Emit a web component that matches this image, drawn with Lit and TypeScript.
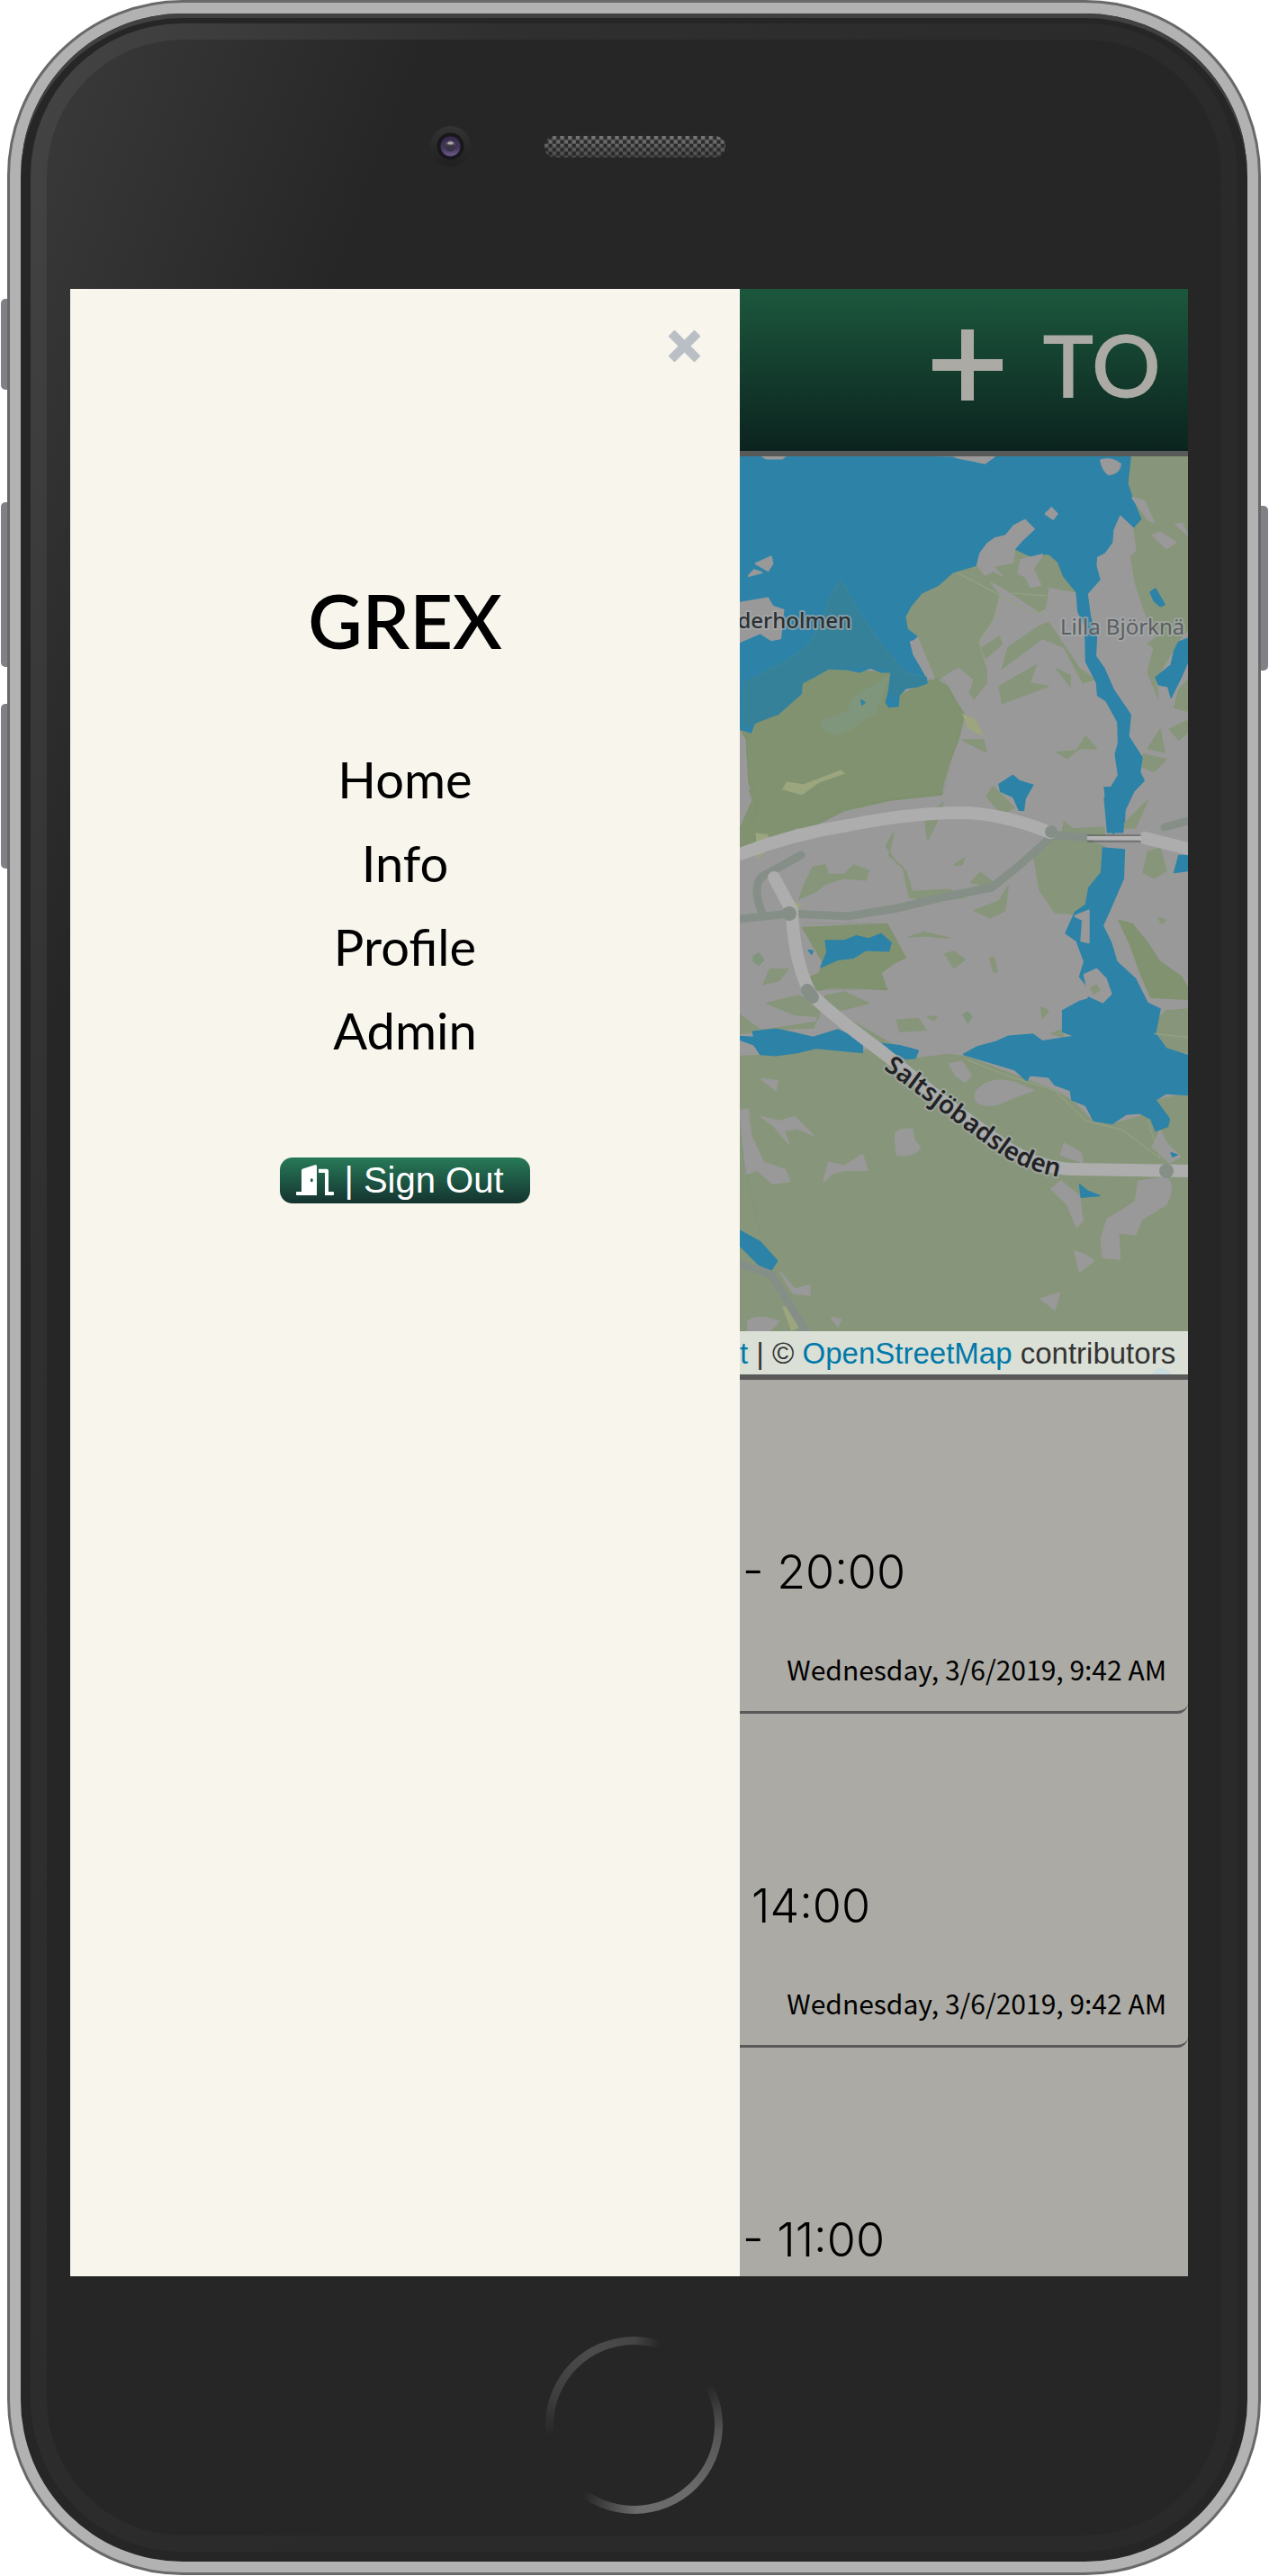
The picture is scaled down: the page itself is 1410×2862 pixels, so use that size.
import { LitElement, html, svg, css } from "lit";
import { customElement } from "lit/decorators.js";

const closeIcon = svg`<svg class="close-icon" viewBox="0 0 37 37" aria-hidden="true"><path d="M1 7 7 1h1l10.500 10.500L29 1h1l6 6v1L25.500 18.500 36 29v1l-6 6h-1L18.500 25.500 8 36H7l-6-6v-1l10.500-10.500L1 8z"/></svg>`;

const doorIcon = svg`<svg class="door-icon" viewBox="0 0 42 34" aria-hidden="true"><path fill-rule="evenodd" d="M6 6.500Q6 5 7.500 4.500L21 .3Q23 0 23 1.500V34H1Q0 34 0 33v-2q0-1 1-1h5zM17.300 15.300a1.500 2 0 1 0 0 4 1.500 2 0 1 0 0-4zM25 4.700h9q2 0 2 2V30h5q1 0 1 1v2q0 1-1 1h-9V9h-7z"/></svg>`;

const plusIcon = svg`<svg class="plus-icon" viewBox="0 0 78 79" aria-hidden="true"><path d="M32 0h14v33h32v13H46v33H32V46H0V33h32z"/></svg>`;

@customElement("area-map")
export class AreaMap extends LitElement {
  static styles = css`
    :host { display: block; position: relative; overflow: hidden; border-bottom: 6px solid #59595a; }
    .map { display: block; width: 100%; height: auto; }
    .g { fill: #87967a; stroke: #87967a; stroke-width: 4; stroke-linejoin: round; }
    .d { fill: #819270; stroke: #819270; stroke-width: 3; stroke-linejoin: round; }
    .w { fill: #2d83a7; stroke: #2d83a7; stroke-width: 4; stroke-linejoin: round; }
    .n { fill: #9a999a; stroke: #9a999a; stroke-width: 5; stroke-linejoin: round; }
    .y { fill: #9ba67f; }
    .park { fill: #35819a; }
    .pond { fill: #80967c; }
    .road { fill: none; stroke: #adadad; stroke-width: 14; stroke-linecap: round; }
    .minor { fill: none; stroke: #858f88; stroke-width: 9; stroke-linecap: round; }
    .knob { fill: #858f88; }
    .path { fill: none; stroke: #93a184; stroke-width: 3; }
    .dots { fill: none; stroke: #6d8d67; stroke-width: 3; stroke-dasharray: 3 5; opacity: .7; }
    .label { font-family: "Noto Sans", sans-serif; font-size: 24px; font-weight: 500; paint-order: stroke; stroke: #a5a9ab; stroke-width: 4px; stroke-linejoin: round; stroke-opacity: .7; fill: #2b2f31; }
    .label-soft { font-weight: 400; fill: #5c5f60; }
    .label-road { font-size: 28px; font-weight: 600; fill: #222; }
    .credit { position: absolute; right: 0; bottom: 0; left: 0; padding: 2px 17px 0 0; text-align: right; white-space: nowrap; font: 33px/46px "Liberation Sans", Arial, sans-serif; color: #333; background: rgba(255, 255, 255, .7); }
    .credit a { color: #0078a8; text-decoration: none; }
  `;

  render() {
    return html`
      <svg class="map" viewBox="0 0 498 1020" role="img" aria-label="Map">
        <rect class="n" width="498" height="1020"/>
        <g transform="translate(-22 393) scale(.3444 .4209)">
          <path class="g" d="M64 650 200 645 310 630 450 640 520 620 640 655 740 645 800 652 950 700 1080 740 1140 770 1205 825 1265 830 1370 805 1415 845 1450 815 1405 765 1510 750V1568H64z"/>
          <path class="d" d="M100-60H380L240 50 130 90 64 105V0z"/>
          <path class="g" d="M255 235 270 200 300 150 340 145 350 170 400 170 430 145 480 160 470 185 400 180 340 195 310 215zM535 95 560 60 545 120 590 150 610 230 700 240 790 230 740 210 620 215 600 160 570 140zM810 190 840 165 880 190 870 205zM1010 110 1060 80 1090 60 1240 95 1230 160 1190 205 1180 250 1140 275 1080 270 1030 210zM1380 110 1420 100 1440 160 1400 180 1365 165zM1110 30 1140 50 1240 45 1240 70 1100 75zM660 20 720-20 700 30 670 80z"/>
          <path class="g" d="M820 265 900 240 930 200 920 265 870 285zM725 380 755 373 790 395 755 417zM870 390l15 0 10 35-12 5zM610 335 660 322 740 338 655 332zM570 555 640 550 665 580 580 585zM670 545 700 545 690 555zM1035 520 1060 530 1040 550zM755 145 790 125 780 145zM1415 285 1440 290 1425 300zM1070 590 1100 580 1110 600zM1400 560 1440 530 1510 525V640L1440 630 1400 600z"/>
          <path class="d" d="M265 310 540 300 600 390 560 405 520 430 540 475 460 470 350 470 290 480 260 450 320 430 330 400zM1285 290 1330 300 1380 350 1420 400 1490 440 1510 470V500L1390 495 1360 440 1320 350z"/>
          <path class="g" d="M64 540 130 580 300 575 320 545 240 540 150 510 250 490 330 510 400 545 560 620 470 600 380 530 480 510 400 480 340 490 310 560 64 590zM160 420 220 420 190 450 140 460z"/>
          <path class="n" d="M64 795 90 790 100 860 140 930 210 950 225 980 170 985 120 950 85 960zM135 810 190 822 240 810 300 858 250 840 205 845 222 880 175 835zM335 980 350 930 400 940 460 910 475 950 400 950 360 960zM565 860Q570 840 620 843L625 870 645 890Q630 915 570 910zM740 670 780 665 810 700 790 717 760 700zM825 745Q870 700 950 720L1010 740Q950 755 900 775 840 785 825 765zM1110 880 1165 905 1170 930 1100 910zM1070 1000 1100 980 1160 1020 1170 1085 1150 1100 1120 1040zM1350 980 1440 970Q1470 990 1440 1040L1360 1080 1340 1120 1285 1115 1290 1185 1235 1180 1230 1130 1250 1080 1340 1035zM1145 1165 1180 1175 1205 1190 1160 1218zM1035 1290 1095 1275 1080 1318zM195 1220 240 1265 290 1255V1280L235 1275zM90 1350Q120 1330 190 1350L160 1375H90zM360 1340 390 1345 380 1362zM1395 890 1420 845 1440 880 1485 915 1450 930zM135 710 185 715 180 740z"/>
          <path class="y" d="M200 1310 220 1310 255 1365 230 1376zM115 60 155 65 160 100 120 130zM240 240 265 252 245 262z"/>
          <path class="w" d="M1240-60H1310L1305 30 1270 62 1255 50zM1235 100 1305 105 1302 180 1260 260 1235 305 1262 350 1280 400 1340 445 1380 510 1420 525 1405 590 1440 630 1510 648V752L1440 748 1405 765 1450 815 1445 835 1405 847 1390 815 1355 800 1310 803 1265 828 1205 820 1180 780 1135 765 1130 740 1080 725 1060 705 1000 700 990 715 950 685 785 645 830 625 890 612 930 597 1010 592 1040 610 1145 597 1105 585 1105 530 1160 505 1185 500 1200 480 1160 440 1175 400 1150 345 1115 325 1145 270 1180 250 1190 205 1230 165zM64 598 110 600 105 585 180 578 240 588 300 600 380 580 460 610 460 640 310 628 250 640 180 648 130 645 110 620 64 606zM505 615 580 622 640 635 630 655 600 657zM340 345 400 345 440 332 480 340 520 327 552 350 545 372 470 370 430 390 380 395 325 415 345 375zM64 1110 130 1140 185 1190 165 1215 125 1200 64 1150zM1160 988 1185 1005 1225 1018 1165 1022zM1480 120H1510V160L1465 165zM285 370 300 372 295 380zM1455 905 1475 910 1460 915z"/>
          <path class="n" d="M1175 435 1215 420 1245 445 1262 485 1235 507 1190 490zM1145 280 1190 265V350L1165 345 1170 290z"/>
          <path class="g" d="M1195 470 1215 462 1225 475 1205 485z"/>
          <path class="pond" d="M105 385 125 375 145 395 125 412 105 400zM780 540 800 530 815 545 800 565z"/>
          <path class="dots" d="M70 900 130 1120M300 475 540 472M270 300 500 298"/>
          <path class="path" d="M800 660 940 705 1080 740 1180 820 1300 845 1420 920M1380 820 1420 920M1440 130 1450 180M1400 590 1510 600"/>
          <path class="w" d="M1395 1490Q1420 1460 1455 1490z" opacity=".6"/>
        </g>
        <g transform="translate(-22 -207) scale(.3444 .3954)">
          <path class="g" d="M1325 520H1510V1010L1480 1040 1440 1100 1405 1150 1415 1205 1380 1130 1400 1060 1380 1050 1410 1030 1370 960 1340 880 1325 805 1345 790 1335 722 1358 700 1330 640 1315 600zM1510 1150 1480 1180 1465 1230 1510 1240zM1510 1265 1450 1290 1480 1320 1510 1300z"/>
          <path class="g" d="M597 975 615 945 650 908 705 885 750 850 825 830 900 912 880 980 835 1040 860 1120 860 1160 820 1205 805 1190 820 1150 770 1115 720 1140 700 1155 640 1030 605 1010z"/>
          <path class="g" d="M955 785 1000 803 1060 797 1090 820 1108 860 1150 905 1060 890 1050 950 1030 960 910 890 850 865 880 850 930 870 890 835 950 825zM840 1065 900 1030 910 1050 860 1090zM900 1170 1020 1110 1000 1160 1060 1170 910 1218zM930 1060 1030 1000 1060 990 1160 1120 1210 1150 1170 1160 1110 1060 1040 1035 910 1120zM1085 1355 1150 1350 1180 1310 1215 1345 1160 1345 1120 1372zM1380 1345 1420 1290 1435 1355zM1365 1360 1440 1375 1400 1410 1362 1395zM1085 1120 1130 1140 1130 1170zM780 1320 850 1320 860 1355zM880 1450 950 1510 910 1530 860 1480zM1310 1550 1380 1490 1340 1568H1300z"/>
          <path class="d" d="M64 1290 110 1275 150 1252 185 1250 262 1190 265 1160 350 1120 520 1130 552 1130 545 1228 578 1195 640 1170 690 1145 735 1170 760 1210 790 1250 770 1320 740 1385 720 1450 715 1475 550 1490 400 1520 290 1568H100L125 1500 90 1440 85 1320z"/>
          <path class="w" d="M64 520H1325L1315 600 1330 640 1358 700 1335 722 1290 685 1268 730 1265 765 1240 795 1215 805 1213 830 1225 870 1185 910 1195 975 1215 1030 1212 1085 1240 1120 1270 1180 1325 1250 1318 1310 1362 1370 1355 1410 1368 1435 1335 1465 1305 1520 1300 1580H1250L1245 1530 1240 1485 1285 1420 1275 1360 1285 1330 1283 1270 1245 1210 1218 1195 1215 1160 1180 1100 1178 1000 1155 960 1150 905 1108 860 1090 820 1060 797 1000 803 955 785 975 765 1020 728 985 697 945 715 920 742 885 750 860 765 835 795 825 830 750 850 705 885 650 908 615 945 597 975 605 1010 635 1030 615 1045 625 1080 665 1140 668 1160 640 1170 600 1175 578 1195 575 1225 545 1228 535 1215 545 1180 552 1130 520 1130 485 1118 450 1130 410 1122 350 1120 310 1140 265 1160 262 1190 185 1250 150 1252 110 1275 100 1300 64 1290z"/>
          <path class="park" d="M78 1160 190 1110 275 1065 330 990 355 920 390 870 440 950 510 1040 600 1135 665 1150 640 1170 600 1175 578 1195 552 1200V1130L485 1118 350 1120 265 1160 262 1190 185 1250 110 1275 78 1290z"/>
          <path class="dots" d="M78 1290V1160L190 1110 275 1065 330 990 355 920 390 870 440 950 510 1040 600 1135 720 1150 785 1245 720 1470 540 1490 400 1510 290 1560M85 1300 92 1430 125 1480 100 1560"/>
          <path class="n" d="M130 520H215L200 530H150zM610 520H740L770 528 820 536 855 543 885 524zM1228 535Q1260 525 1292 545 1290 570 1255 575 1235 565 1228 535zM1050 685 1070 668 1088 685 1075 700zM115 825 165 805 170 825 155 845zM92 860 110 843 135 850zM64 935 155 922 170 945 205 955 195 1035 165 1040 130 1020 64 1045zM615 1045 635 1040 690 1150 665 1140 625 1080zM1330 640 1370 650 1400 710 1380 700zM1395 745 1420 737 1470 765 1440 782zM1470 715 1490 712 1510 745zM970 815 1040 800 1010 840 1035 885 1000 890 990 865 962 850z"/>
          <path class="n" d="M64 1330H80L90 1460 100 1490 64 1560z"/>
          <path class="pond" d="M325 1265 410 1240 430 1200 545 1140 500 1250 470 1260 430 1290 370 1308 335 1295z"/>
          <path class="y" d="M200 1460 215 1438 270 1445 390 1405 405 1415 320 1440 265 1475zM780 1245 825 1262 850 1310 800 1290z"/>
          <path class="w" d="M900 1445 945 1420 965 1435 1010 1447 985 1485 980 1518H965L945 1480 905 1465zM1388 905 1405 895 1435 940 1420 945 1400 930zM1510 1035 1480 1045 1465 1070 1455 1110 1405 1145 1415 1165 1445 1170 1455 1202 1490 1140 1510 1100zM455 1208 468 1215 458 1222z"/>
          <path class="path" d="M765 850 900 912 1000 962 1060 965M940 908 1050 915M900 920 890 975 835 1045 858 1110"/>
        </g>
        <path class="minor" d="M0 514 55 508 120 511 175 502 225 490 280 479 310 455 347 422M25 508Q10 470 32 463L68 443M344 420 390 424M472 412 498 405"/>
        <path class="road" d="M0 442Q60 419 120 410 190 396 245 396 290 396 345 418M450 424 498 436M38 468 58 505Q60 560 78 596 95 615 160 663 240 730 300 770 335 791 370 792L498 794"/>
        <path d="M75 593 81 601" fill="none" stroke="#858f88" stroke-width="14" stroke-linecap="round"/>
        <circle class="knob" cx="55" cy="508" r="8"/>
        <circle class="knob" cx="474" cy="794" r="8"/>
        <circle class="knob" cx="346" cy="417" r="7"/>
        <path d="M386 421H446M386 428H446" stroke="#555" stroke-width="1"/>
        <path d="M386 424H446" stroke="#b5b5b5" stroke-width="4"/>
        <path class="minor" d="M0 897 35 909 75 975"/>
        <text class="label" x="124" y="191" text-anchor="end">derholmen</text>
        <text class="label label-soft" x="356" y="198">Lilla Björknä</text>
        <path id="road-line" fill="none" d="M159 680Q240 740 290 776 330 800 374 803"/>
        <text class="label label-road"><textPath href="#road-line">Saltsjöbadsleden</textPath></text>
      </svg>
      <div class="credit"><a href="#t">t</a> | © <a href="#osm">OpenStreetMap</a> contributors</div>
    `;
  }
}

@customElement("app-root")
export class AppRoot extends LitElement {
  static styles = css`
    :host { display: block; background: #fff; color: #000; }
    * { box-sizing: border-box; }
    .stage { display: grid; grid-template-columns: 8px minmax(0, 1fr) 9px; padding-bottom: 2px; }
    .side { display: flex; flex-direction: column; }
    .side-left { padding: 332px 0 0 1px; }
    .side-right { padding: 562px 1px 0 0; }
    .key { height: 183px; background: #808087; border-radius: 5px 0 0 5px; }
    .key-mute { height: 101px; margin-bottom: 125px; }
    .key-up { margin-bottom: 41px; }
    .key-power { border-radius: 0 5px 5px 0; }
    .shell { padding: 12px; border: 3px solid #696969; border-radius: 195px; background: #b2b2b2; }
    .rim { padding: 11px; border-radius: 180px; background: #262626; box-shadow: inset 0 5px 0 #404240; }
    .bevel { padding: 18px; border-radius: 169px; background: linear-gradient(111deg, #454545, #2f2f2f 22%, #2a2a2a 60%); }
    .face { border-radius: 151px; background: linear-gradient(111deg, #3a3a3a, #262626 18%); }
    .top { display: grid; grid-template-columns: 1fr auto 1fr; align-items: center; gap: 82px; padding: 96px 0 136px 1px; }
    .camera { display: block; width: 45px; height: 45px; justify-self: end; }
    .speaker { display: block; width: 201px; height: 24px; }
    .screen { display: grid; grid-template-columns: 744fr 498fr; margin: 0 37px 0 26px; }
    .drawer { display: flex; flex-direction: column; align-items: center; background: #f8f5ed; font-family: Lato, sans-serif; }
    .close { align-self: flex-end; margin: 45px 43px 0 0; padding: 0; border: 0; background: none; }
    .close-icon { display: block; width: 37px; height: 37px; fill: #b9bfc4; }
    .title { margin: 238px 0 82px; font-size: 83px; line-height: 96px; font-weight: 600; }
    .nav { display: flex; flex-direction: column; align-items: center; }
    .nav a { color: #000; text-decoration: none; font-size: 56px; line-height: 93px; font-weight: 400; }
    .signout { display: flex; align-items: center; gap: 11px; height: 51px; margin-top: 95px; padding: 0 29px 2px 18px; border: 0; border-radius: 14px; color: #fff; background: linear-gradient(#277a58, #14332f); font: 40px/46px "Liberation Sans", Arial, sans-serif; }
    .door-icon { width: 42px; height: 34px; fill: #fff; }
    .pane { min-width: 0; overflow: hidden; background: #abaaa4; }
    .bar { display: flex; justify-content: flex-end; align-items: center; gap: 44px; height: 186px; padding: 0 30px 12px 0; border-bottom: 6px solid #59595a; background: linear-gradient(#1c573d, #0b231e); color: #abaaa4; }
    .add { padding: 0; border: 0; background: none; }
    .plus-icon { display: block; width: 78px; height: 79px; fill: #abaaa4; }
    .account { font: 600 96px/120px Lato, sans-serif; }
    .list { margin: 0; padding: 0; list-style: none; }
    .item { padding: 174px 24px 24px 3px; border-bottom: 3px solid #59595a; border-bottom-right-radius: 12px; }
    .item-last { padding-bottom: 0; border: 0; }
    .time { display: block; font: 300 52px/80px Inter, sans-serif; }
    .time-inset { padding-left: 10px; }
    .stamp { display: block; margin-top: 45px; text-align: right; white-space: nowrap; font: 30px/45px "Noto Sans CJK JP", sans-serif; }
    .bottom { display: flex; justify-content: center; padding: 67px 0 24px; }
    .home { width: 197px; height: 197px; padding: 9px; border: 0; border-radius: 50%; background: conic-gradient(#454545, #26262600 18deg, #26262600 62deg, #555 95deg, #6b6b6b 140deg, #6b6b6b 178deg, #262626 216deg, #262626 263deg, #3e3e3e 290deg, #4c4c4c 330deg, #454545); }
    .home-face { display: block; height: 100%; border-radius: 50%; background: #262626; }
  `;

  private links = ["Home", "Info", "Profile", "Admin"];
  private entries = [
    { time: "- 20:00", stamp: "Wednesday, 3/6/2019, 9:42 AM" },
    { time: "14:00", stamp: "Wednesday, 3/6/2019, 9:42 AM" },
    { time: "- 11:00", stamp: "" },
  ];

  render() {
    return html`
      <div class="stage">
        <div class="side side-left">
          <div class="key key-mute"></div>
          <div class="key key-up"></div>
          <div class="key"></div>
        </div>
        <div class="shell"><div class="rim"><div class="bevel"><div class="face">
          <div class="top">
            <svg class="camera" viewBox="0 0 45 45" aria-hidden="true">
              <defs>
                <linearGradient id="ring" x2="0" y2="1"><stop stop-color="#333"/><stop offset="1" stop-color="#202020"/></linearGradient>
                <linearGradient id="lens" x2="0" y2="1"><stop stop-color="#35294a"/><stop offset=".6" stop-color="#44365c"/><stop offset="1" stop-color="#6d5c8a"/></linearGradient>
                <linearGradient id="core" x2="0" y2="1"><stop stop-color="#77747e"/><stop offset=".5" stop-color="#3a3640"/><stop offset="1" stop-color="#39304a"/></linearGradient>
              </defs>
              <circle cx="22.500" cy="22.500" r="22.500" fill="url(#ring)"/>
              <circle cx="22.500" cy="22.500" r="15" fill="#18181c"/>
              <circle cx="22.500" cy="22.500" r="11" fill="url(#lens)"/>
              <circle cx="22.500" cy="22.500" r="6" fill="url(#core)"/>
              <ellipse cx="22.500" cy="19" rx="3" ry="1.500" fill="#aaa"/>
            </svg>
            <svg class="speaker" viewBox="0 0 201 24" aria-hidden="true">
              <defs>
                <pattern id="mesh" width="8.700" height="8.700" patternUnits="userSpaceOnUse"><path fill="#777" d="M0 0h4.350v4.350H0zM4.350 4.350h4.350v4.350H4.350z"/></pattern>
                <linearGradient id="shade" x2="0" y2="1"><stop stop-color="#262626" stop-opacity="0"/><stop offset="1" stop-color="#262626" stop-opacity=".55"/></linearGradient>
              </defs>
              <rect width="201" height="24" rx="12" fill="#2b2b2b"/>
              <rect width="201" height="24" rx="12" fill="url(#mesh)"/>
              <rect width="201" height="24" rx="12" fill="url(#shade)"/>
            </svg>
          </div>
          <main class="screen">
            <aside class="drawer">
              <button class="close" aria-label="Close">${closeIcon}</button>
              <h1 class="title">GREX</h1>
              <nav class="nav">${this.links.map((l) => html`<a href="#${l.toLowerCase()}">${l}</a>`)}</nav>
              <button class="signout">${doorIcon}<span>| Sign Out</span></button>
            </aside>
            <section class="pane">
              <header class="bar">
                <button class="add" aria-label="Add">${plusIcon}</button>
                <span class="account">TO</span>
              </header>
              <area-map></area-map>
              <ul class="list">
                ${this.entries.map((e) => html`
                  <li class="item ${e.stamp ? "" : "item-last"}">
                    <span class="time ${e.time.startsWith("-") ? "" : "time-inset"}">${e.time}</span>
                    ${e.stamp ? html`<span class="stamp">${e.stamp}</span>` : ""}
                  </li>`)}
              </ul>
            </section>
          </main>
          <div class="bottom"><button class="home" aria-label="Home button"><span class="home-face"></span></button></div>
        </div></div></div></div>
        <div class="side side-right"><div class="key key-power"></div></div>
      </div>
    `;
  }
}
